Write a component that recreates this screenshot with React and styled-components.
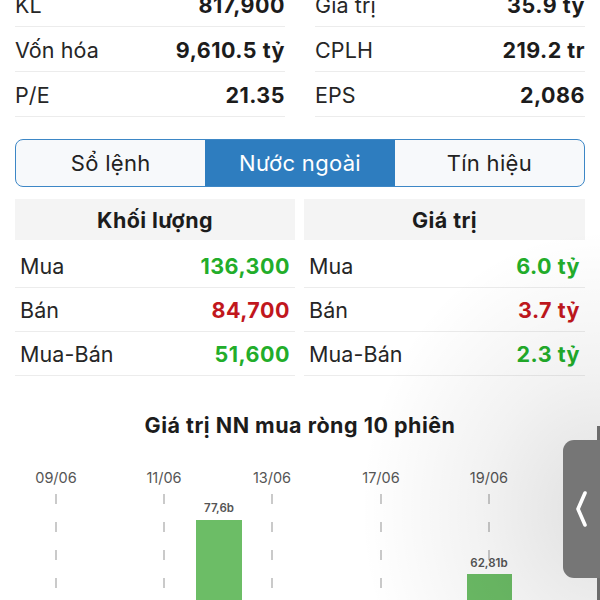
import React from "react";
import styled, { createGlobalStyle } from "styled-components";

const Global = createGlobalStyle`
  html, body { margin: 0; padding: 0; background: #fff; }
  body { font-family: Inter, "Noto Sans", "Liberation Sans", sans-serif; color: #222; }
`;

const Page = styled.div`
  position: relative;
  width: 600px;
  height: 600px;
  overflow: hidden;
  background: #fff;
`;

const Section = styled.div`
  padding: 0 15px;
`;

const InfoGrid = styled.div`
  display: grid;
  grid-template-columns: 1fr 1fr;
  column-gap: 30px;
  margin-top: -18px;
`;

const InfoRow = styled.div`
  display: flex;
  align-items: center;
  justify-content: space-between;
  border-bottom: 1px solid #ececec;
  font-size: 21.5px;
  padding-top: 2px;
  box-sizing: border-box;
  height: 45px;
`;

const Label = styled.span`
  color: #262626;
  letter-spacing: 0.1px;
`;

const Value = styled.span`
  font-weight: 700;
  letter-spacing: 0.5px;
  color: ${(p) => p.$color || "#1c1c1c"};
`;

const Tabs = styled.div`
  display: grid;
  grid-template-columns: 1fr 1fr 1fr;
  height: 48px;
  margin-top: 22px;
  border: 1.5px solid #3d87c6;
  border-radius: 8px;
  overflow: hidden;
  box-sizing: border-box;
  background: #f7f9fb;
`;

const Tab = styled.div`
  display: flex;
  align-items: center;
  justify-content: center;
  font-size: 22px;
  letter-spacing: 0.3px;
  color: ${(p) => (p.$active ? "#fff" : "#222")};
  background: ${(p) => (p.$active ? "#2e7dbf" : "transparent")};
`;

const Tables = styled.div`
  display: grid;
  grid-template-columns: 280px 281px;
  column-gap: 9px;
  margin-top: 12px;
`;

const TableHead = styled.div`
  height: 41px;
  display: flex;
  align-items: center;
  justify-content: center;
  background: #f4f4f4;
  font-size: 21.5px;
  font-weight: 700;
  letter-spacing: 0.4px;
  color: #1c1c1c;
  margin-bottom: 4px;
`;

const TableRow = styled.div`
  height: 43px;
  display: flex;
  align-items: center;
  justify-content: space-between;
  padding: 0 5px;
  border-bottom: 1px solid #ececec;
  font-size: 21.5px;
`;

const ChartTitle = styled.div`
  margin-top: 36px;
  text-align: center;
  font-size: 21.5px;
  font-weight: 700;
  letter-spacing: 0.5px;
  color: #1c1c1c;
  line-height: 26px;
`;

const ChartSvg = styled.svg`
  display: block;
  margin-top: 18px;
`;

const Shade = styled.div`
  position: absolute;
  inset: 0;
  pointer-events: none;
  background: radial-gradient(
    ellipse 240px 280px at 100% 510px,
    rgba(0, 0, 0, 0.12) 0%,
    rgba(0, 0, 0, 0.05) 50%,
    rgba(0, 0, 0, 0) 100%
  );
`;

const EdgeStrip = styled.div`
  position: absolute;
  right: 0;
  top: 426px;
  bottom: 0;
  width: 3px;
  background: #6c6c6c;
`;

const Handle = styled.div`
  position: absolute;
  right: 0;
  top: 440px;
  width: 37px;
  height: 138px;
  background: #767676;
  border-radius: 11px 0 0 11px;
  display: flex;
  align-items: center;
  justify-content: center;
`;

const GREEN = "#22ad2a";
const RED = "#c1171d";

const info = [
  ["KL", "817,900", "Giá trị", "35.9 tỷ"],
  ["Vốn hóa", "9,610.5 tỷ", "CPLH", "219.2 tr"],
  ["P/E", "21.35", "EPS", "2,086"],
];

const volume = [
  ["Mua", "136,300", GREEN],
  ["Bán", "84,700", RED],
  ["Mua-Bán", "51,600", GREEN],
];
const value = [
  ["Mua", "6.0 tỷ", GREEN],
  ["Bán", "3.7 tỷ", RED],
  ["Mua-Bán", "2.3 tỷ", GREEN],
];

const dates = [
  ["09/06", 56],
  ["11/06", 164],
  ["13/06", 272],
  ["17/06", 381],
  ["19/06", 489],
];

const FONT = "Inter, 'Liberation Sans', sans-serif";

function Chart() {
  const off = 455;
  return (
    <ChartSvg width="600" height="150" viewBox={`0 ${off} 600 150`}>
      {dates.map(([d, x]) => (
        <g key={d}>
          <text x={x} y={482} textAnchor="middle" fontSize="14.5" fill="#555" fontFamily={FONT}>
            {d}
          </text>
          <line
            x1={x}
            x2={x}
            y1={493}
            y2={610}
            stroke="#bdbdbd"
            strokeWidth="1.6"
            strokeDasharray="10 18"
          />
        </g>
      ))}
      <rect x="196" y="519" width="46" height="100" fill="#6cbd66" />
      <text x="219" y="511" textAnchor="middle" fontSize="11.5" fontWeight="600" fill="#555" fontFamily={FONT}>
        77,6b
      </text>
      <rect x="467" y="573" width="45" height="50" fill="#6cbd66" />
      <text x="489" y="566" textAnchor="middle" fontSize="11.5" fontWeight="600" fill="#555" fontFamily={FONT}>
        62,81b
      </text>
    </ChartSvg>
  );
}

function DataTable({ title, rows }) {
  return (
    <div>
      <TableHead>{title}</TableHead>
      {rows.map(([l, v, c]) => (
        <TableRow key={l}>
          <Label>{l}</Label>
          <Value $color={c}>{v}</Value>
        </TableRow>
      ))}
    </div>
  );
}

export default function App() {
  return (
    <>
      <Global />
      <Page>
        <Section>
          <InfoGrid>
            {info.map(([l1, v1, l2, v2]) => (
              <React.Fragment key={l1}>
                <InfoRow>
                  <Label>{l1}</Label>
                  <Value>{v1}</Value>
                </InfoRow>
                <InfoRow>
                  <Label>{l2}</Label>
                  <Value>{v2}</Value>
                </InfoRow>
              </React.Fragment>
            ))}
          </InfoGrid>
          <Tabs>
            <Tab>Sổ lệnh</Tab>
            <Tab $active>Nước ngoài</Tab>
            <Tab>Tín hiệu</Tab>
          </Tabs>
          <Tables>
            <DataTable title="Khối lượng" rows={volume} />
            <DataTable title="Giá trị" rows={value} />
          </Tables>
          <ChartTitle>Giá trị NN mua ròng 10 phiên</ChartTitle>
        </Section>
        <Chart />
        <Shade />
        <EdgeStrip />
        <Handle>
          <svg width="14" height="38" viewBox="0 0 14 38">
            <polyline
              points="10,3 3,19 10,35"
              fill="none"
              stroke="#fff"
              strokeWidth="3.6"
              strokeLinecap="round"
              strokeLinejoin="round"
            />
          </svg>
        </Handle>
      </Page>
    </>
  );
}
